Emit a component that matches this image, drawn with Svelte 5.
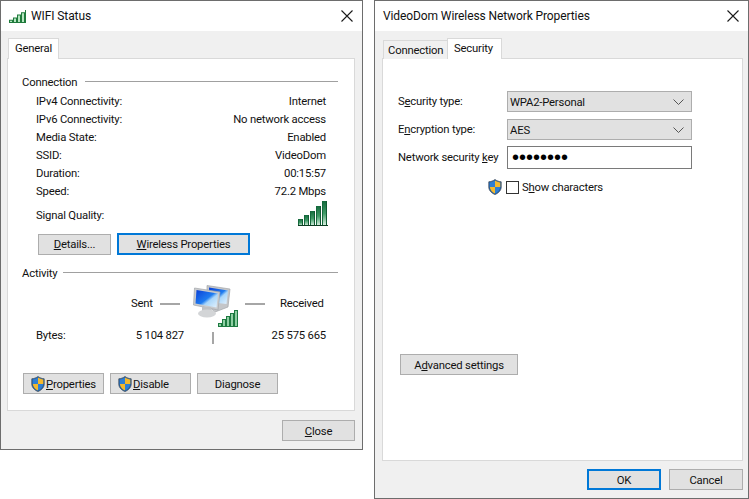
<script>
  const infoRows = [
    ['IPv4 Connectivity:', 'Internet'],
    ['IPv6 Connectivity:', 'No network access'],
    ['Media State:', 'Enabled'],
    ['SSID:', 'VideoDom'],
    ['Duration:', '00:15:57'],
    ['Speed:', '72.2 Mbps']
  ];
  const bigBars = [
    { x: 0, h: 7 }, { x: 6, h: 11 }, { x: 12, h: 15 }, { x: 18, h: 20 }, { x: 24, h: 25 }
  ];
  const smallBars = [
    { x: 0, h: 3 }, { x: 4, h: 6 }, { x: 8, h: 10 }, { x: 12, h: 13 }, { x: 16, h: 16 }
  ];
  const pcBars = [
    { x: 25.5, h: 3 }, { x: 29.5, h: 7 }, { x: 33.5, h: 10 }, { x: 37.5, h: 13 }, { x: 41.5, h: 16 }
  ];
</script>

{#snippet shield()}
  <svg class="shield" viewBox="0 0 14 16" width="14" height="16" aria-hidden="true">
    <path d="M7 .5 C5 2 3 2.6.8 2.8 V8 C.8 11.5 3.5 14.2 7 15.5 C10.5 14.2 13.2 11.5 13.2 8 V2.8 C11 2.6 9 2 7 .5Z" fill="#1c5fa8" stroke="#47525e" stroke-width=".8"/>
    <path d="M7 1.6 V8 H12.3 V3.6 C10.5 3.3 8.6 2.8 7 1.6Z" fill="#f5b92c"/>
    <path d="M7 8 H1.8 C2 11 4.2 13.3 7 14.5Z" fill="#f5b92c"/>
    <path d="M7 1.6 C5.4 2.8 3.5 3.3 1.7 3.6 V8 H7Z" fill="#2f7fd3"/>
    <path d="M7 8 V14.5 C9.8 13.3 12 11 12.2 8Z" fill="#2f7fd3"/>
  </svg>
{/snippet}

{#snippet closeX()}
  <svg class="x" viewBox="0 0 12 12" width="12" height="12" aria-hidden="true">
    <path d="M.5 .5 L11.5 11.5 M11.5 .5 L.5 11.5" stroke="#1a1a1a" stroke-width="1.1" fill="none"/>
  </svg>
{/snippet}

{#snippet chevron()}
  <svg class="chev" viewBox="0 0 11 6" width="11" height="6" aria-hidden="true">
    <path d="M.5 .5 L5.5 5.5 L10.5 .5" stroke="#555" stroke-width="1" fill="none"/>
  </svg>
{/snippet}

<div class="desktop">
  <section class="win left">
    <header class="title">
      <svg class="wifi" viewBox="0 0 17 13" width="17" height="13" aria-hidden="true">
        {#each smallBars as b}
          <rect x={b.x + 0.5} y={12.5 - b.h * 0.75} width="3" height={b.h * 0.75} fill="#b6e6c0" stroke="#1f7a3c" stroke-width="1"/>
        {/each}
      </svg>
      <span>WIFI Status</span>
      {@render closeX()}
    </header>
    <div class="client left-client">
      <div class="tabs">
        <div class="tab active general">General</div>
      </div>
      <div class="panel left-panel">
        <div class="legend"><span>Connection</span><i></i></div>
        <div class="rows">
          {#each infoRows as [k, v]}
            <div class="row"><span>{k}</span><span>{v}</span></div>
          {/each}
        </div>
        <div class="signal">
          <span>Signal Quality:</span>
          <svg viewBox="0 0 30 25" width="30" height="25" aria-hidden="true">
            <defs>
              <linearGradient id="bar" x1="0" y1="0" x2="0" y2="1">
                <stop offset="0" stop-color="#14693c"/>
                <stop offset=".5" stop-color="#3f9a66"/>
                <stop offset="1" stop-color="#e2f6e8"/>
              </linearGradient>
            </defs>
            {#each bigBars as b}
              <rect x={b.x} y={25 - b.h} width="5" height={b.h} fill="url(#bar)"/>
              <rect x={b.x} y={25 - b.h} width="1" height={b.h} fill="#15693c"/>
              <rect x={b.x + 4} y={25 - b.h} width="1" height={b.h} fill="#0f5a32"/>
            {/each}
            <rect x="0" y="24" width="30" height="1" fill="#0c3d22"/>
          </svg>
        </div>
        <div class="btn-row first">
          <button class="btn details"><span><u>D</u>etails...</span></button>
          <button class="btn focus wireless"><span><u>W</u>ireless Properties</span></button>
        </div>
        <div class="legend activity"><span>Activity</span><i></i></div>
        <div class="traffic">
          <span class="sent">Sent</span>
          <i class="dash d1"></i>
          <svg class="pc" viewBox="0 0 48 43" width="48" height="43" aria-hidden="true">
            <defs>
              <linearGradient id="scr" x1="0" y1="0" x2="1" y2="1">
                <stop offset="0" stop-color="#0a3fd6"/>
                <stop offset=".5" stop-color="#1f7cf0"/>
                <stop offset=".62" stop-color="#a9d6fa"/>
                <stop offset="1" stop-color="#e4f2fd"/>
              </linearGradient>
            </defs>
            <path d="M14 .5 L37 4 L35 22 L22 27 L14 20Z" fill="#c4c6c9" stroke="#a3a6aa" stroke-width=".7"/>
            <path d="M16 2.5 L35 5.5 L33.5 19 L16 17Z" fill="url(#scr)"/>
            <path d="M1.5 3 L27 7 L25 25 L.5 20Z" fill="#c9cbce" stroke="#a3a6aa" stroke-width=".7"/>
            <path d="M3.5 5 L25 8.5 L23.5 22.5 L2.5 18.5Z" fill="url(#scr)"/>
            <path d="M9 22 H18 L19 27 H9Z" fill="#bfc1c4"/>
            <ellipse cx="14" cy="28.5" rx="9" ry="4" fill="#d3d5d7"/>
            {#each pcBars as b}
              <rect x={b.x} y={41.5 - b.h} width="3" height={b.h} fill="#8fcfa3" stroke="#1d7a40" stroke-width="1"/>
            {/each}
          </svg>
          <i class="dash d2"></i>
          <span class="received">Received</span>
        </div>
        <div class="bytes">
          <span class="b-label">Bytes:</span>
          <span class="b-sent">5 104 827</span>
          <i class="tick"></i>
          <span class="b-recv">25 575 665</span>
        </div>
        <div class="btn-row bottom">
          <button class="btn wide with-icon">{@render shield()}<span><u>P</u>roperties</span></button>
          <button class="btn wide with-icon">{@render shield()}<span><u>D</u>isable</span></button>
          <button class="btn wide"><span>Dia<u>g</u>nose</span></button>
        </div>
      </div>
      <div class="foot">
        <button class="btn action"><span><u>C</u>lose</span></button>
      </div>
    </div>
  </section>

  <section class="win right">
    <header class="title">
      <span>VideoDom Wireless Network Properties</span>
      {@render closeX()}
    </header>
    <div class="client right-client">
      <div class="tabs">
        <div class="tab connection">Connection</div>
        <div class="tab active security">Security</div>
      </div>
      <div class="panel right-panel">
        <div class="form">
          <label for="st">S<u>e</u>curity type:</label>
          <div class="select" id="st"><span>WPA2-Personal</span>{@render chevron()}</div>
          <label for="et">E<u>n</u>cryption type:</label>
          <div class="select second" id="et"><span>AES</span>{@render chevron()}</div>
          <label for="ky">Network security <u>k</u>ey</label>
          <div class="input" id="ky">••••••••</div>
        </div>
        <div class="show">
          {@render shield()}
          <i class="check"></i>
          <span>S<u>h</u>ow characters</span>
        </div>
        <button class="btn advanced"><span>A<u>d</u>vanced settings</span></button>
      </div>
      <div class="foot right-foot">
        <button class="btn action focus"><span>OK</span></button>
        <button class="btn action"><span>Cancel</span></button>
      </div>
    </div>
  </section>
</div>

<style>
  :global(body) { margin: 0; background: #fff; }
  .desktop {
    width: 749px; height: 499px; display: flex; align-items: flex-start; gap: 11px;
    font-family: Roboto, "Noto Sans", sans-serif; font-size: 11.3px; letter-spacing: -0.2px; color: #111; overflow: hidden;
  }
  .win { box-sizing: border-box; border: 1px solid #6d6d6d; background: #f0f0f0; display: flex; flex-direction: column; }
  .left { width: 363px; height: 450px; }
  .right { width: 375px; height: 499px; }
  .title { height: 30px; flex: none; background: #fff; display: flex; align-items: center; padding: 0 9px 0 8px; gap: 5px; font-size: 12px; letter-spacing: -0.1px; }
  .title span { flex: 1; }
  .x { flex: none; }
  .client { flex: 1; display: flex; flex-direction: column; padding: 7px 8px 0 6px; min-height: 0; }
  .right-client { padding: 7px 8px 0 7px; }
  .tabs { display: flex; align-items: flex-end; height: 21px; padding-left: 1px; margin-bottom: -1px; position: relative; z-index: 1; }
  .tab { box-sizing: border-box; height: 19px; padding: 0 4px; border: 1px solid #d9d9d9; border-bottom: none; background: #f0f0f0; display: flex; align-items: center; white-space: nowrap; }
  .tab.active { background: #fff; height: 21px; padding-bottom: 2px; padding-left: 6px; }
  .general { width: 51px; height: 21px; }
  .connection { width: 65px; margin-right: -1px; }
  .security { width: 55px; }
  .panel { box-sizing: border-box; background: #fff; border: 1px solid #d9d9d9; flex: none; }
  .left-panel { width: 348px; height: 353px; padding: 14px 16px 0 14px; }
  .right-panel { width: 361px; height: 403px; padding: 32px 0 0 15px; }

  .legend { display: flex; align-items: center; gap: 8px; height: 18px; }
  .legend i { flex: 1; height: 1px; background: #a0a0a0; margin-top: -2px; }
  .activity { gap: 6px; margin-top: 9px; }
  .rows { padding: 1px 12px 0 14px; }
  .row { display: flex; justify-content: space-between; height: 18px; line-height: 20px; }
  .signal { display: flex; justify-content: space-between; align-items: center; padding: 0 10px 0 14px; height: 25px; margin-top: 1px; }
  .signal span { padding-top: 4px; }

  .btn { box-sizing: border-box; height: 21px; padding: 0; border: 1px solid #adadad; background: #e1e1e1; font: inherit; letter-spacing: inherit; color: inherit; display: flex; align-items: center; justify-content: center; border-radius: 0; flex: none; }
  .btn span { padding-top: 2px; }
  .focus { border: 2px solid #0078d7; }
  .btn-row { display: flex; }
  .btn-row.first { margin-top: 7px; padding-left: 16px; gap: 6px; align-items: center; }
  .first .btn span { padding-top: 0; }
  .details { width: 73px; }
  .wireless { width: 133px; height: 22px; }
  .traffic { display: flex; align-items: flex-start; height: 44px; padding-left: 109px; }
  .sent { width: 29px; padding-top: 15px; flex: none; }
  .dash { display: block; width: 20px; height: 2px; background: #a6a6a6; margin-top: 21px; flex: none; }
  .pc { margin: 3px 0 0 13px; flex: none; }
  .d2 { margin-left: 4px; }
  .received { margin-left: 15px; padding-top: 15px; }
  .bytes { display: flex; height: 18px; line-height: 20px; padding-left: 14px; white-space: nowrap; }
  .b-label { width: 90px; }
  .b-sent { width: 58px; text-align: right; }
  .tick { width: 2px; height: 12px; background: #a6a6a6; margin: 6px 0 0 28px; flex: none; }
  .b-recv { margin-left: auto; margin-right: 12px; }
  .btn-row.bottom { margin-top: 29px; padding-left: 1px; gap: 6px; }
  .wide { width: 81px; }
  .with-icon { justify-content: flex-start; padding-left: 7px; gap: 1px; }
  .shield { flex: none; }
  .foot { display: flex; justify-content: flex-end; padding-top: 9px; gap: 8px; }
  .left-client .foot { width: 348px; }
  .right-foot { width: 361px; padding-top: 8px; }
  .action { width: 73px; }
  .right-foot .action { width: 74px; }

  .form { display: grid; grid-template-columns: 109px 185px; row-gap: 6px; align-items: center; }
  .form label { white-space: nowrap; }
  .select, .input { box-sizing: border-box; height: 21px; display: flex; align-items: center; padding: 0 7px 0 2px; justify-content: space-between; }
  .select { background: #e1e1e1; border: 1px solid #adadad; }
  .select span { padding-top: 2px; }
  .second { margin-top: 1px; }
  .input { height: 23px; background: #fff; border: 1px solid #7a7a7a; padding-left: 4px; font-size: 20px; letter-spacing: 0; font-family: "Liberation Sans", sans-serif; color: #000; }
  .show { display: flex; align-items: center; padding-left: 90px; margin-top: 10px; height: 16px; gap: 4px; }
  .check { box-sizing: border-box; width: 13px; height: 13px; border: 1px solid #333; background: #fff; }
  .show span { margin-left: -1px; }
  .advanced { width: 118px; margin: 159px 0 0 2px; }
</style>
